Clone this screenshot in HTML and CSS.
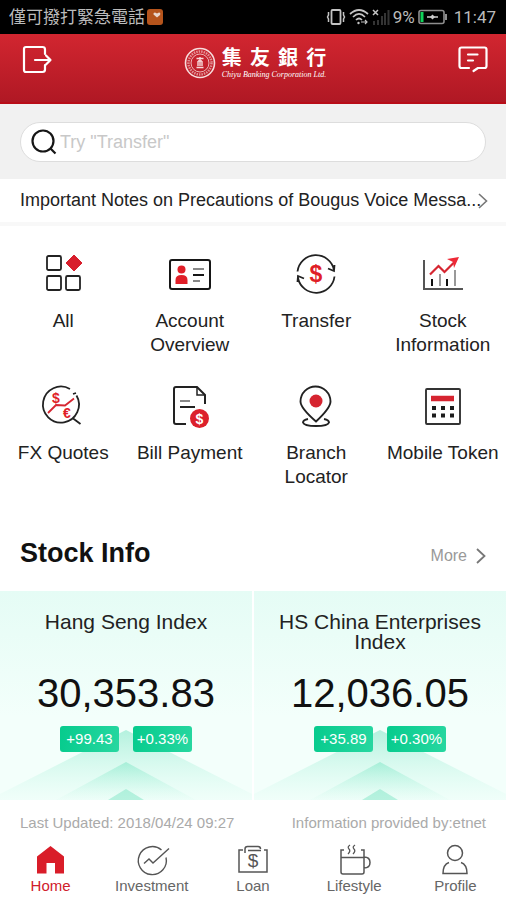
FILE: index.html
```
<!DOCTYPE html>
<html lang="en">

<head>
    <meta charset="UTF-8">
    <meta name="viewport" content="width=device-width, initial-scale=1.0">
    <title>Chiyu Banking</title>
    <link rel="stylesheet" href="styles.css">
</head>

<body>
    <!-- phone status bar -->
    <div class="status">
        <span class="carrier">僅可撥打緊急電話</span>
        <svg class="app-badge" width="16" height="16" viewBox="0 0 16 16">
            <rect width="16" height="16" rx="3" fill="#b5541c" />
            <path d="M10 8.500 6.500 5.500Q6 3.500 8 3.500L10 4.500 12 3.500Q14 4 13 6Z" fill="#e8d5cb" />
        </svg>
        <div class="status-right">
            <svg width="20" height="18" viewBox="0 0 20 18" fill="none" stroke="#c4c4c4" stroke-width="1.800">
                <rect x="5.500" y="2" width="9" height="14" rx="1" />
                <path d="M2.500 4v3l-1 2 1 2v3M17.500 4v3l1 2-1 2v3" stroke-width="1.500" />
            </svg>
            <svg width="20" height="18" viewBox="0 0 20 18" fill="none" stroke="#c4c4c4" stroke-width="1.700">
                <path d="M1 6Q10-2 19 6M4 9Q10 3 16 9M7 12Q10 9 13 12" />
                <circle cx="9.500" cy="15" r="1.200" fill="#c4c4c4" stroke="none" />
                <path d="M12 14h6M16 12l2 2-2 2" stroke-width="1.200" />
            </svg>
            <svg width="18" height="18" viewBox="0 0 18 18">
                <path d="M1 2l5 5M6 2 1 7" stroke="#c4c4c4" stroke-width="1.500" />
                <path d="M2 17v-4M6 17v-5M10 17V8M13 17V5M16.500 17V2" stroke="#343434" stroke-width="2" />
            </svg>
            <span>9%</span>
            <svg class="battery" width="30" height="18" viewBox="0 0 30 18" fill="none">
                <rect x="1" y="2.500" width="25" height="13" rx="2" stroke="#8e8e8e" stroke-width="1.600" />
                <path d="M28 6v6" stroke="#8e8e8e" stroke-width="2" />
                <path d="M4 4v10" stroke="#10d35a" stroke-width="3" />
                <path d="M9 9h11" stroke="#ccc" stroke-width="1.500" />
                <path d="M12 9l2.500-2.500 2.500 2.500-2.500 2.500z" fill="#ccc" />
            </svg>
            <span>11:47</span>
        </div>
    </div>

    <header class="header">
        <button class="icon-btn" aria-label="Log out">
            <svg width="30" height="30" viewBox="0 0 30 30" fill="none" stroke="#fff" stroke-width="2.200" stroke-linecap="round" stroke-linejoin="round">
                <path d="M23 9V4.500q0-2.500-2.500-2.500H4Q2 2 2 4v21q0 2 2 2h16.500q2.500 0 2.500-2.500V20" />
                <path d="M13 15h15M24 10.500l4.500 4.500-4.500 4.500" />
            </svg>
        </button>
        <div class="brand">
            <svg width="32" height="32" viewBox="0 0 32 32" fill="none" stroke="#f7dcdc">
                <circle cx="16" cy="16" r="14.500" stroke-width="1.600" />
                <circle cx="16" cy="16" r="11.500" stroke-width="2.500" stroke-dasharray="1.500 1" opacity=".6" />
                <circle cx="16" cy="16" r="9" stroke-width=".8" />
                <path d="M12.500 11.500h7M14 14h4M14 14v5M18 14v5M12.500 20.500h7M16 10v9" stroke-width="1.400" />
            </svg>
            <div class="brand-text">
                <div class="brand-zh"><span>集</span><span>友</span><span>銀</span><span>行</span></div>
                <div class="brand-en">Chiyu Banking Corporation Ltd.</div>
            </div>
        </div>
        <button class="icon-btn" aria-label="Messages">
            <svg width="30" height="28" viewBox="0 0 30 28" fill="none" stroke="#fff" stroke-width="2.200" stroke-linecap="round" stroke-linejoin="round">
                <path d="M11 23H3.500q-2 0-2-2V4.500q0-2 2-2h23q2 0 2 2V21q0 2-2 2H20l-4.500 3" />
                <path d="M10 9.500h9.500M10 15.500h5" />
            </svg>
        </button>
    </header>

    <form class="search">
        <div class="search-box">
            <svg width="26" height="26" viewBox="0 0 26 26" fill="none" stroke="#161616" stroke-width="2.200">
                <circle cx="12" cy="12" r="10.500" />
                <path d="M19.500 19.500l5 5" />
            </svg>
            <input type="text" aria-label="Search" placeholder='Try "Transfer"'>
        </div>
    </form>

    <a class="notice" href="#">
        <span>Important Notes on Precautions of Bougus Voice Messa...</span>
        <svg width="10" height="16" viewBox="0 0 10 16" fill="none" stroke="#777" stroke-width="1.600">
            <path d="M1 1l7.500 7L1 15" />
        </svg>
    </a>

    <main>
        <nav class="menu">
            <a href="#">
                <svg width="44" height="44" viewBox="0 0 44 44" fill="none" stroke="#222" stroke-width="1.800">
                    <rect x="6" y="4" width="14" height="14" rx="1.500" />
                    <rect x="6" y="24" width="14" height="14" rx="1.500" />
                    <rect x="25" y="24" width="14" height="14" rx="1.500" />
                    <path d="M33 3l8 8-8 8-8-8z" fill="#d81e2c" stroke="#d81e2c" stroke-width="1" stroke-linejoin="round" />
                </svg>
                <span>All</span>
            </a>
            <a href="#">
                <svg width="44" height="44" viewBox="0 0 44 44" fill="none" stroke="#161616" stroke-width="2">
                    <rect x="2" y="8" width="40" height="29" rx="2" />
                    <circle cx="13.500" cy="17.500" r="4" fill="#e01e28" stroke="none" />
                    <path d="M7.500 32v-4q0-5 6-5t6 5v4z" fill="#e01e28" stroke="none" />
                    <path d="M25 17h11" stroke="#888" />
                    <path d="M25 23h11" />
                    <path d="M25 29h7" stroke="#888" />
                </svg>
                <span>Account Overview</span>
            </a>
            <a href="#">
                <svg width="44" height="44" viewBox="0 0 44 44" fill="none" stroke="#222" stroke-width="1.800">
                    <path d="M3.500 19.500A18.500 18.500 0 0 1 40 18M34 16.500l6 2.500.5-6" />
                    <path d="M40.500 24.500A18.500 18.500 0 0 1 4 26M10 26.500 4 24l-.5 6" />
                    <text class="dollar" x="22" y="30">$</text>
                </svg>
                <span>Transfer</span>
            </a>
            <a href="#">
                <svg width="44" height="44" viewBox="0 0 44 44" fill="none" stroke="#555" stroke-width="2">
                    <path d="M3 8v29h39" />
                    <path d="M11 27v7M26 27v7" stroke="#111" />
                    <path d="M19 22v12M34 18v16" stroke="#999" />
                    <path d="M9 22.500l8.500-8.500 6 6 10-10" stroke="#d62631" stroke-width="2.200" />
                    <path d="M26 7l12-2-5 11-1-6z" fill="#ee2937" stroke="none" />
                </svg>
                <span>Stock Information</span>
            </a>
            <a href="#">
                <svg width="44" height="44" viewBox="0 0 44 44" fill="none" stroke="#222" stroke-width="1.800">
                    <path d="M29 5A18 18 0 1 0 35.500 11.500M31.500 34l8 6M32 10l3-1" />
                    <path d="M7 29l8-8 9 .5 9-7" stroke="#d62631" />
                    <text class="fx-sign" x="15" y="19">$</text>
                    <text class="fx-sign" x="26" y="34">€</text>
                </svg>
                <span>FX Quotes</span>
            </a>
            <a href="#">
                <svg width="44" height="44" viewBox="0 0 44 44" fill="none" stroke="#222" stroke-width="2">
                    <path d="M18 40H8q-2 0-2-2V5q0-2 2-2h21l8 8v9" />
                    <path d="M29 3v8h8" stroke-width="1.500" />
                    <path d="M12 17h10" stroke="#888" />
                    <path d="M12 23h15" />
                    <circle cx="31.500" cy="34.500" r="9.500" fill="#dc202b" stroke="none" />
                    <text class="bill-sign" x="31.500" y="39.500">$</text>
                </svg>
                <span>Bill Payment</span>
            </a>
            <a href="#">
                <svg width="44" height="44" viewBox="0 0 44 44" fill="none" stroke="#222" stroke-width="1.900">
                    <path d="M22 37.500Q6.500 24 6.500 17.500a15 15 0 0 1 30 0Q36.500 24 22 37.500z" />
                    <path d="M14 35q-5 1-5 3.500Q10 42 22 42t13-3.500q0-2.500-5-3.500" />
                    <circle cx="22" cy="17" r="6.500" fill="#d62430" stroke="none" />
                </svg>
                <span>Branch Locator</span>
            </a>
            <a href="#">
                <svg width="44" height="44" viewBox="0 0 44 44" fill="none" stroke="#333" stroke-width="1.900">
                    <rect x="5" y="5" width="34" height="35" rx="1" />
                    <path d="M10 14.500h23" stroke="#d62430" stroke-width="5.500" />
                    <path d="M11 24h23M11 31.500h23" stroke="#1c1c1c" stroke-width="4" stroke-dasharray="4 5" />
                </svg>
                <span>Mobile Token</span>
            </a>
        </nav>

        <section>
            <div class="section-head">
                <h2>Stock Info</h2>
                <a class="more" href="#">More
                    <svg width="10" height="16" viewBox="0 0 10 16" fill="none" stroke="#777" stroke-width="1.800">
                        <path d="M1 1l7.500 7L1 15" />
                    </svg>
                </a>
            </div>
            <div class="stocks">
                <div class="stock">
                    <svg class="peaks" viewBox="0 0 252 70">
                        <defs>
                            <linearGradient id="peak" x1="0" y1="0" x2="0" y2="1">
                                <stop offset="0" stop-color="#7fe6c6" stop-opacity=".55" />
                                <stop offset="1" stop-color="#b8f5e1" stop-opacity=".05" />
                            </linearGradient>
                        </defs>
                        <path d="M126 0 252 64v6H0v-6z" fill="url(#peak)" />
                        <path d="M126 32 196 70H56z" fill="url(#peak)" />
                        <path d="M126 59 144 70h-36z" fill="#7fe6c6" opacity=".5" />
                    </svg>
                    <h3>Hang Seng Index</h3>
                    <p class="price">30,353.83</p>
                    <div class="changes"><span>+99.43</span><span>+0.33%</span></div>
                </div>
                <div class="stock">
                    <svg class="peaks" viewBox="0 0 252 70">
                        <path d="M126 0 252 64v6H0v-6z" fill="url(#peak)" />
                        <path d="M126 32 196 70H56z" fill="url(#peak)" />
                        <path d="M126 59 144 70h-36z" fill="#7fe6c6" opacity=".5" />
                    </svg>
                    <h3>HS China Enterprises Index</h3>
                    <p class="price">12,036.05</p>
                    <div class="changes"><span>+35.89</span><span>+0.30%</span></div>
                </div>
            </div>
            <div class="source">
                <span>Last Updated: 2018/04/24 09:27</span>
                <span>Information provided by:etnet</span>
            </div>
        </section>
    </main>

    <nav class="tabs">
        <a class="active" href="#">
            <svg width="32" height="32" viewBox="0 0 32 32">
                <path d="M15.500 2 29 12.500v17H20V19h-8.500v10.500H2v-17z" fill="#d91d29" />
            </svg>
            <span>Home</span>
        </a>
        <a href="#">
            <svg width="32" height="32" viewBox="0 0 32 32" fill="none" stroke="#555" stroke-width="1.400">
                <path d="M25.500 6A14 14 0 1 0 30 13.500M8 19.500l5-4.500 4 4L33 4.500" />
            </svg>
            <span>Investment</span>
        </a>
        <a href="#">
            <svg width="32" height="32" viewBox="0 0 32 32" fill="none" stroke="#555" stroke-width="1.500">
                <path d="M6 6H2v22h28V6h-3M8 9V5q0-2.500 2.500-2.500h10.500Q23.500 2.500 23.500 5M11 6.500h13" />
                <text class="loan-sign" x="16" y="23">$</text>
            </svg>
            <span>Loan</span>
        </a>
        <a href="#">
            <svg width="32" height="32" viewBox="0 0 32 32" fill="none" stroke="#555" stroke-width="1.500">
                <path d="M6 6H3v22q0 2 2 2h19q2 0 2-2V6h-3M3 13.500h23M26 13q6 0 6 5.500T26 24" />
                <path d="M12 1q-3 2-1 4t-1 5M17 1q-3 2-1 4t-1 5" stroke-width="1.300" />
            </svg>
            <span>Lifestyle</span>
        </a>
        <a href="#">
            <svg width="32" height="32" viewBox="0 0 32 32" fill="none" stroke="#555" stroke-width="1.500">
                <circle cx="16" cy="9" r="7.500" />
                <path d="M10 18.500q-6 2-6 11h24q0-9-6-11" />
            </svg>
            <span>Profile</span>
        </a>
    </nav>
</body>

</html>
```
FILE: styles.css
```
* {
    margin: 0;
    padding: 0;
    box-sizing: border-box;
}

body {
    background: #fff;
    color: #222;
    font-family: "Liberation Sans", "Noto Sans CJK TC", sans-serif;
    font-size: 19px;
}

a {
    color: inherit;
    text-decoration: none;
}

svg {
    display: block;
    flex: none;
    overflow: visible;
}

/* Status bar */
.status {
    display: flex;
    align-items: center;
    height: 34px;
    padding: 0 10px 0 9px;
    background: #000;
    color: #bbb;
    font-family: Roboto, "Noto Sans CJK TC", sans-serif;
    font-size: 17px;
    line-height: 20px;
}

.app-badge {
    margin-left: 2px;
}

.status-right {
    display: flex;
    align-items: center;
    gap: 3px;
    margin-left: auto;
}

.battery {
    margin-right: 3px;
}

/* Header */
.header {
    display: flex;
    justify-content: space-between;
    align-items: flex-start;
    height: 70px;
    padding: 11px 18px 0 22px;
    background: linear-gradient(#d22630, #b01824);
    border-bottom: 2px solid #b80d18;
}

.icon-btn {
    border: none;
    background: none;
    cursor: pointer;
}

.brand {
    display: flex;
    align-items: center;
    gap: 6px;
    color: #fff;
    padding-top: 2px;
}

.brand-zh {
    display: flex;
    justify-content: space-between;
    font-size: 20px;
    font-weight: bold;
    line-height: 23px;
}

.brand-en {
    font-family: "Liberation Serif", serif;
    font-size: 8px;
    font-style: italic;
    line-height: 9px;
}

/* Search */
.search {
    padding: 18px 20px 17px;
    background: #f1f1f1;
}

.search-box {
    display: flex;
    align-items: center;
    gap: 3px;
    height: 40px;
    padding: 0 10px;
    background: #fff;
    border: 1px solid #ddd;
    border-radius: 20px;
}

.search-box input {
    flex: 1;
    min-width: 0;
    border: none;
    outline: none;
    background: none;
    font-family: inherit;
    font-size: 18px;
}

.search-box input::placeholder {
    color: #c8c8c8;
}

.notice {
    display: flex;
    justify-content: space-between;
    align-items: center;
    height: 47px;
    padding: 0 18px 0 20px;
    border-bottom: 4px solid #f8f8f8;
    font-size: 18px;
    white-space: nowrap;
}

.notice span {
    min-width: 0;
}

/* Shortcut menu */
.menu {
    display: grid;
    grid-template-columns: repeat(4, 1fr);
    row-gap: 27px;
    padding-top: 26px;
}

.menu a {
    display: flex;
    flex-direction: column;
    align-items: center;
    gap: 13px;
    line-height: 24px;
    text-align: center;
}

.menu text {
    stroke: none;
    fill: #e01e28;
    font-weight: bold;
    text-anchor: middle;
}

.menu .dollar {
    font-size: 23px;
}

.menu .fx-sign {
    font-size: 14px;
}

.menu .bill-sign {
    fill: #fff;
    font-size: 14px;
}

/* Stock info */
.section-head {
    display: flex;
    justify-content: space-between;
    align-items: center;
    padding: 48px 20px 22px;
}

.section-head h2 {
    color: #111;
    font-size: 27px;
    line-height: 32px;
}

.more {
    display: flex;
    align-items: center;
    gap: 9px;
    padding-top: 6px;
    color: #999;
    font-size: 16px;
}

.stocks {
    display: grid;
    grid-template-columns: 1fr 1fr;
    gap: 2px;
}

.stock {
    position: relative;
    height: 209px;
    padding: 21px 20px 0;
    background: linear-gradient(#e5fcf5, #f3fffb 60%);
    text-align: center;
}

.peaks {
    position: absolute;
    left: 0;
    bottom: 0;
    width: 100%;
}

.stock h3 {
    height: 40px;
    font-size: 21px;
    font-weight: normal;
    line-height: 20px;
}

.price {
    margin-top: 18px;
    color: #111;
    font-size: 40px;
    line-height: 46px;
}

.changes {
    position: relative;
    display: flex;
    justify-content: center;
    gap: 14px;
    margin-top: 10px;
}

.changes span {
    width: 59px;
    border-radius: 3px;
    background: linear-gradient(100deg, #06cb8d, #27d7a0);
    color: #fff;
    font-size: 15px;
    line-height: 26px;
}

.source {
    display: flex;
    justify-content: space-between;
    padding: 14px 20px 12px;
    color: #aaa;
    font-size: 15px;
    line-height: 18px;
}

/* Bottom tabs */
.tabs {
    display: grid;
    grid-template-columns: repeat(5, 1fr);
    padding-bottom: 5px;
    color: #666;
    font-size: 15px;
    line-height: 18px;
}

.tabs a {
    display: flex;
    flex-direction: column;
    align-items: center;
    gap: 1px;
}

.tabs .active {
    color: #d0202b;
}

.loan-sign {
    fill: #555;
    stroke: none;
    font-size: 19px;
    text-anchor: middle;
}
```
